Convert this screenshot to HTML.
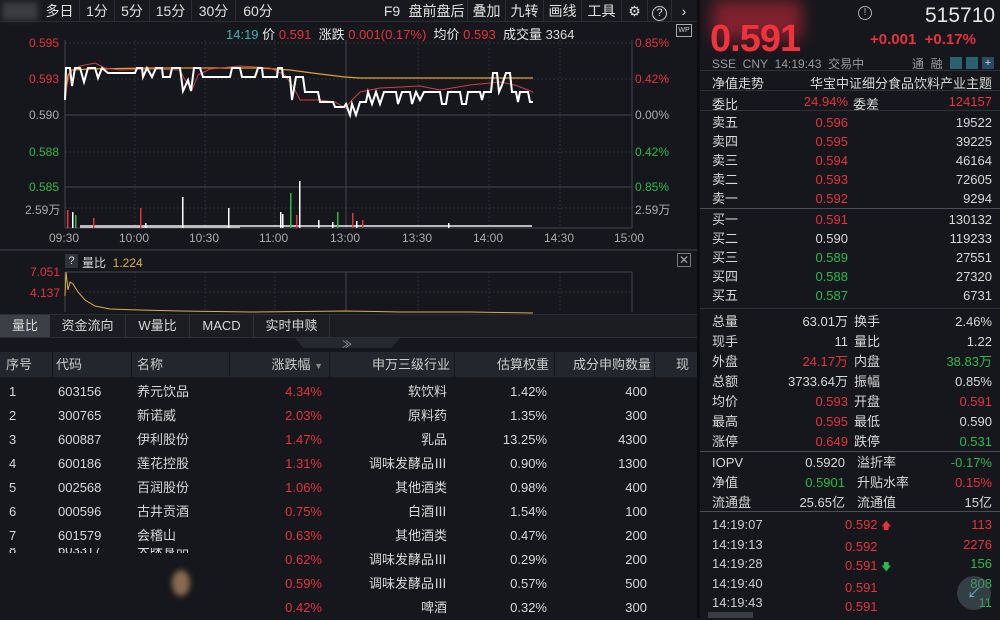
<!DOCTYPE html>
<html><head><meta charset="utf-8"><style>
*{margin:0;padding:0;box-sizing:border-box}
body{width:1000px;height:618px;background:#15171c;font-family:"Liberation Sans","Noto Sans CJK SC",sans-serif;font-size:13px;color:#d8d8d8;position:relative;overflow:hidden}
.a{position:absolute;white-space:nowrap}
.r{color:#e8323c}.g{color:#2fb84a}.w{color:#e6e6e6}.gy{color:#9a9a9a}.y{color:#e0b040}
.tb{position:absolute;top:0;height:22px;line-height:22px;font-size:14px;color:#e0e0e0;text-align:center;border-right:1px solid #2a2d33}
.rt{position:absolute;text-align:right;white-space:nowrap}
.ln{position:absolute;left:700px;width:300px;height:1px;background:#2e3138}
</style></head><body>
<!-- left area -->
<div class="a" style="left:0;top:0;width:697px;height:22px;background:#17191e;border-bottom:1px solid #2a2d33"></div>
<div class="a" style="left:2px;top:2px;width:36px;height:18px;background:#3a3c40;filter:blur(3px)"></div>
<div class="tb" style="left:40px;width:40px">多日</div>
<div class="tb" style="left:80px;width:35px">1分</div>
<div class="tb" style="left:115px;width:35px">5分</div>
<div class="tb" style="left:150px;width:42px">15分</div>
<div class="tb" style="left:192px;width:44px">30分</div>
<div class="tb" style="left:236px;width:44px;border:none">60分</div>
<div class="tb" style="left:378px;width:28px;border:none">F9</div>
<div class="tb" style="left:406px;width:62px">盘前盘后</div>
<div class="tb" style="left:468px;width:38px">叠加</div>
<div class="tb" style="left:506px;width:38px">九转</div>
<div class="tb" style="left:544px;width:38px">画线</div>
<div class="tb" style="left:582px;width:40px">工具</div>
<div class="tb" style="left:622px;width:26px">⚙</div>
<div class="tb" style="left:648px;width:24px"><span style="display:inline-block;width:15px;height:15px;border:1px solid #ccc;border-radius:50%;font-size:11px;line-height:13px">?</span></div>
<div class="tb" style="left:672px;width:24px;border:none">›</div>

<div class="a" style="top:24px;left:226px;font-size:13px"><span style="color:#3bb6b6">14:19</span> <span class="w">价</span> <span class="r">0.591</span>&nbsp; <span class="w">涨跌</span> <span class="r">0.001(0.17%)</span>&nbsp; <span class="w">均价</span> <span class="r">0.593</span>&nbsp; <span class="w">成交量</span> 3364</div>
<div class="a" style="left:676px;top:24px;width:16px;height:13px;border:1px solid #aaa;font-size:7px;line-height:11px;text-align:center;color:#ccc">WP</div>

<svg class="a" style="left:0;top:0" width="697" height="340">
<g stroke="#2c2f36" stroke-dasharray="2,2" fill="none">
<line x1="65" y1="43" x2="632" y2="43"/><line x1="65" y1="79" x2="632" y2="79"/><line x1="65" y1="152" x2="632" y2="152"/><line x1="65" y1="208" x2="632" y2="208"/>
<line x1="135" y1="40" x2="135" y2="228"/><line x1="205" y1="40" x2="205" y2="228"/><line x1="275" y1="40" x2="275" y2="228"/><line x1="418" y1="40" x2="418" y2="228"/><line x1="489" y1="40" x2="489" y2="228"/><line x1="560" y1="40" x2="560" y2="228"/>
<line x1="135" y1="272" x2="135" y2="312"/><line x1="205" y1="272" x2="205" y2="312"/><line x1="275" y1="272" x2="275" y2="312"/><line x1="418" y1="272" x2="418" y2="312"/><line x1="489" y1="272" x2="489" y2="312"/><line x1="560" y1="272" x2="560" y2="312"/>
<line x1="65" y1="292" x2="632" y2="292"/>
</g>
<g stroke="#41444b" fill="none">
<line x1="65" y1="40" x2="65" y2="228"/><line x1="632" y1="40" x2="632" y2="228"/><line x1="346" y1="40" x2="346" y2="228"/>
<line x1="65" y1="115" x2="632" y2="115"/><line x1="65" y1="187" x2="632" y2="187"/><line x1="65" y1="228" x2="632" y2="228"/>
<line x1="65" y1="272" x2="65" y2="312"/><line x1="632" y1="272" x2="632" y2="312"/><line x1="346" y1="272" x2="346" y2="312"/><line x1="65" y1="272" x2="632" y2="272"/>
<line x1="0" y1="250" x2="697" y2="250"/>
</g>
<polyline fill="none" stroke="#e0a030" stroke-width="1.2" points="65,100 68,75 72,70 90,69 150,68 200,68 260,68 290,70 320,74 345,77 360,78 533,78"/>
<polyline fill="none" stroke="#d04040" stroke-width="1" points="65,95 70,72 80,66 95,63 105,68 120,70 150,69 180,70 185,80 192,90 198,75 210,69 240,66 270,68 285,75 295,90 300,100 320,100 335,102 345,108 352,100 360,92 380,88 420,86 440,90 470,85 500,82 515,85 533,92"/>
<polyline fill="none" stroke="#fff" stroke-width="2" points="65,100 66,68 70,68 72,86 75,68 80,68 84,82 88,68 95,68 98,78 102,68 108,73 135,73 137,68 142,68 143,77 147,68 152,77 156,68 162,68 163,77 170,77 172,68 180,68 183,91 188,80 191,91 194,68 200,68 203,77 220,77 230,77 232,68 240,68 242,77 255,77 258,68 262,68 263,77 277,77 278,68 282,68 283,77 290,77 292,100 296,77 303,77 305,92 318,92 320,102 333,102 335,107 344,107 346,104 350,115 352,104 356,115 360,102 366,102 368,92 372,104 376,92 380,104 384,92 396,92 398,104 402,92 410,92 412,104 416,92 420,100 424,92 440,92 442,104 446,104 448,92 460,92 462,104 466,104 468,92 480,92 482,100 484,92 491,92 493,73 497,73 499,92 502,85 506,73 510,73 512,92 516,92 518,102 520,92 528,92 530,102 533,102"/>
<g fill="#fff">
<rect x="72" y="212" width="1.5" height="16"/><rect x="145" y="223" width="1.5" height="5"/><rect x="182" y="197" width="1.5" height="31"/><rect x="228" y="208" width="1.5" height="20"/><rect x="280" y="212" width="1.5" height="16"/><rect x="282" y="214" width="1.5" height="14"/><rect x="299" y="181" width="1.5" height="47"/><rect x="318" y="220" width="1.5" height="8"/><rect x="332" y="222" width="1.5" height="6"/><rect x="356" y="221" width="1.5" height="7"/><rect x="448" y="223" width="1.5" height="5"/>
</g>
<g fill="#fff" opacity="0.7">
<rect x="80" y="225" width="160" height="3"/><rect x="240" y="225" width="130" height="2"/><rect x="370" y="225" width="162" height="2"/>
</g>
<g fill="#e8323c"><rect x="67" y="210" width="1.5" height="18"/><rect x="93" y="218" width="1.5" height="10"/><rect x="140" y="208" width="1.5" height="20"/><rect x="296" y="215" width="1.5" height="13"/><rect x="352" y="213" width="1.5" height="15"/><rect x="362" y="220" width="1.5" height="8"/></g>
<g fill="#2fb84a"><rect x="75" y="215" width="1.5" height="13"/><rect x="290" y="193" width="1.5" height="35"/><rect x="337" y="212" width="1.5" height="16"/></g>
<polyline fill="none" stroke="#e0b040" stroke-width="1" points="65,296 66,272 68,290 70,282 73,284 78,292 85,300 95,306 110,309 140,310 180,311 250,312 346,311 400,312 470,312 533,313"/>
</svg>
<div class="a r" style="left:29px;top:36px;font-size:12px">0.595</div>
<div class="a r" style="left:29px;top:72px;font-size:12px">0.593</div>
<div class="a gy" style="left:29px;top:108px;font-size:12px;color:#aaa">0.590</div>
<div class="a g" style="left:29px;top:145px;font-size:12px">0.588</div>
<div class="a g" style="left:29px;top:180px;font-size:12px">0.585</div>
<div class="a" style="left:25px;top:201px;font-size:12px;color:#aaa">2.59万</div>
<div class="a r" style="left:635px;top:36px;font-size:12px">0.85%</div>
<div class="a r" style="left:635px;top:72px;font-size:12px">0.42%</div>
<div class="a" style="left:635px;top:108px;font-size:12px;color:#aaa">0.00%</div>
<div class="a g" style="left:635px;top:145px;font-size:12px">0.42%</div>
<div class="a g" style="left:635px;top:180px;font-size:12px">0.85%</div>
<div class="a" style="left:635px;top:201px;font-size:12px;color:#aaa">2.59万</div>
<div class="a" style="top:231px;left:49px;font-size:12px;color:#aaa;width:600px;height:14px">
<span class="a" style="left:0">09:30</span><span class="a" style="left:70px">10:00</span><span class="a" style="left:140px">10:30</span><span class="a" style="left:210px">11:00</span><span class="a" style="left:281px">13:00</span><span class="a" style="left:353px">13:30</span><span class="a" style="left:424px">14:00</span><span class="a" style="left:495px">14:30</span><span class="a" style="left:565px">15:00</span></div>

<div class="a" style="left:65px;top:254px;width:13px;height:14px;background:#30333a;color:#ddd;font-size:11px;text-align:center;line-height:14px">?</div>
<div class="a" style="left:82px;top:254px;font-size:12px">量比 <span class="y">&nbsp;1.224</span></div>
<div class="a r" style="left:30px;top:265px;font-size:12px">7.051</div>
<div class="a r" style="left:30px;top:286px;font-size:12px">4.137</div>
<div class="a" style="left:677px;top:253px;width:14px;height:14px;border:1px solid #777;color:#aaa;font-size:12px;line-height:12px;text-align:center">✕</div>

<div class="a" style="left:0;top:314px;width:697px;height:24px;background:#1b1d22;border-top:1px solid #2a2d33;border-bottom:1px solid #2a2d33"></div>
<div class="a" style="left:0;top:315px;width:50px;height:22px;background:#3c3f46;line-height:22px;text-align:center">量比</div>
<div class="a" style="left:50px;top:315px;width:76px;height:22px;line-height:22px;text-align:center;border-right:1px solid #2e3138">资金流向</div>
<div class="a" style="left:126px;top:315px;width:64px;height:22px;line-height:22px;text-align:center;border-right:1px solid #2e3138">W量比</div>
<div class="a" style="left:190px;top:315px;width:64px;height:22px;line-height:22px;text-align:center;border-right:1px solid #2e3138">MACD</div>
<div class="a" style="left:254px;top:315px;width:76px;height:22px;line-height:22px;text-align:center;border-right:1px solid #2e3138">实时申赎</div>
<div class="a" style="left:295px;top:338px;width:105px;height:10px;background:#25282e;clip-path:polygon(0 0,100% 0,92% 100%,8% 100%)"></div>
<div class="a" style="left:342px;top:336px;font-size:10px;color:#aaa">≫</div>

<div class="a" style="left:0;top:352px;width:697px;height:25px;background:#23262c"></div>
<div class="a" style="top:352px;left:0;width:697px;height:25px;line-height:25px;font-size:13px;color:#ccc">
<span class="a" style="left:6px">序号</span><span class="a" style="left:56px">代码</span><span class="a" style="left:137px">名称</span>
<span class="rt" style="right:374px">涨跌幅 <span style="font-size:9px;color:#888">▼</span></span><span class="rt" style="right:247px">申万三级行业</span><span class="rt" style="right:148px">估算权重</span><span class="rt" style="right:46px">成分申购数量</span><span class="a" style="left:676px">现</span>
</div>
<div class="a" style="left:52px;top:352px;width:1px;height:25px;background:#15171c"></div>
<div class="a" style="left:131px;top:352px;width:1px;height:25px;background:#15171c"></div>
<div class="a" style="left:229px;top:352px;width:1px;height:25px;background:#15171c"></div>
<div class="a" style="left:329px;top:352px;width:1px;height:25px;background:#15171c"></div>
<div class="a" style="left:454px;top:352px;width:1px;height:25px;background:#15171c"></div>
<div class="a" style="left:554px;top:352px;width:1px;height:25px;background:#15171c"></div>
<div class="a" style="left:654px;top:352px;width:1px;height:25px;background:#15171c"></div>

<div class="a" style="left:0;top:380px;width:697px;font-size:13px;line-height:24px">
<div style="position:relative;height:24px"><span class="a" style="left:9px">1</span><span class="a" style="left:58px">603156</span><span class="a" style="left:137px">养元饮品</span><span class="rt r" style="right:375px">4.34%</span><span class="rt" style="right:250px">软饮料</span><span class="rt" style="right:150px">1.42%</span><span class="rt" style="right:50px">400</span></div>
<div style="position:relative;height:24px"><span class="a" style="left:9px">2</span><span class="a" style="left:58px">300765</span><span class="a" style="left:137px">新诺威</span><span class="rt r" style="right:375px">2.03%</span><span class="rt" style="right:250px">原料药</span><span class="rt" style="right:150px">1.35%</span><span class="rt" style="right:50px">300</span></div>
<div style="position:relative;height:24px"><span class="a" style="left:9px">3</span><span class="a" style="left:58px">600887</span><span class="a" style="left:137px">伊利股份</span><span class="rt r" style="right:375px">1.47%</span><span class="rt" style="right:250px">乳品</span><span class="rt" style="right:150px">13.25%</span><span class="rt" style="right:50px">4300</span></div>
<div style="position:relative;height:24px"><span class="a" style="left:9px">4</span><span class="a" style="left:58px">600186</span><span class="a" style="left:137px">莲花控股</span><span class="rt r" style="right:375px">1.31%</span><span class="rt" style="right:250px">调味发酵品Ⅲ</span><span class="rt" style="right:150px">0.90%</span><span class="rt" style="right:50px">1300</span></div>
<div style="position:relative;height:24px"><span class="a" style="left:9px">5</span><span class="a" style="left:58px">002568</span><span class="a" style="left:137px">百润股份</span><span class="rt r" style="right:375px">1.06%</span><span class="rt" style="right:250px">其他酒类</span><span class="rt" style="right:150px">0.98%</span><span class="rt" style="right:50px">400</span></div>
<div style="position:relative;height:24px"><span class="a" style="left:9px">6</span><span class="a" style="left:58px">000596</span><span class="a" style="left:137px">古井贡酒</span><span class="rt r" style="right:375px">0.75%</span><span class="rt" style="right:250px">白酒Ⅲ</span><span class="rt" style="right:150px">1.54%</span><span class="rt" style="right:50px">100</span></div>
<div style="position:relative;height:24px"><span class="a" style="left:9px">7</span><span class="a" style="left:58px">601579</span><span class="a" style="left:137px">会稽山</span><span class="rt r" style="right:375px">0.63%</span><span class="rt" style="right:250px">其他酒类</span><span class="rt" style="right:150px">0.47%</span><span class="rt" style="right:50px">200</span></div>
<div style="position:relative;height:24px;overflow:hidden"><span class="a" style="left:9px;top:-10px">8</span><span class="a" style="left:58px;top:-10px">603317</span><span class="a" style="left:137px;top:-10px">天味食品</span><span class="rt r" style="right:375px">0.62%</span><span class="rt" style="right:250px">调味发酵品Ⅲ</span><span class="rt" style="right:150px">0.29%</span><span class="rt" style="right:50px">200</span></div>
<div style="position:relative;height:24px"><span class="rt r" style="right:375px">0.59%</span><span class="rt" style="right:250px">调味发酵品Ⅲ</span><span class="rt" style="right:150px">0.57%</span><span class="rt" style="right:50px">500</span></div>
<div style="position:relative;height:24px"><span class="rt r" style="right:375px">0.42%</span><span class="rt" style="right:250px">啤酒</span><span class="rt" style="right:150px">0.32%</span><span class="rt" style="right:50px">300</span></div>
</div>
<div class="a" style="left:0;top:553px;width:230px;height:65px;background:#15171c"></div>
<div class="a" style="left:172px;top:570px;width:18px;height:26px;background:#8a6a50;border-radius:50%;filter:blur(3px)"></div>

<!-- right panel -->
<div class="a" style="left:697px;top:0;width:3px;height:618px;background:#0c0d10"></div>
<div class="a" style="left:712px;top:0;width:90px;height:40px;background:#c8283a;opacity:.6;filter:blur(8px)"></div>
<div class="a r" style="left:710px;top:18px;font-size:38px;font-weight:bold;letter-spacing:-1px;color:#f0323c">0.591</div>
<div class="a" style="left:858px;top:6px;width:14px;height:14px;border:1.5px solid #aaa;border-radius:50%;font-size:10px;line-height:11px;text-align:center;color:#aaa">!</div>
<div class="a" style="left:925px;top:4px;font-size:21px;color:#e6e6e6">515710</div>
<div class="a r" style="left:870px;top:31px;font-size:15px;font-weight:bold">+0.001&nbsp; +0.17%</div>
<div class="a gy" style="left:712px;top:55px;font-size:12px">SSE&nbsp; CNY&nbsp; 14:19:43&nbsp; 交易中</div>
<div class="a gy" style="left:912px;top:55px;font-size:12px">通&nbsp; 融</div>
<div class="a" style="left:950px;top:57px;width:12px;height:12px;background:#2a6070"></div>
<div class="a" style="left:966px;top:57px;width:12px;height:12px;background:#2a6070"></div>
<div class="a" style="left:982px;top:57px;width:12px;height:12px;background:#2a4a60;color:#cde;font-size:11px;line-height:12px;text-align:center">+</div>
<div class="ln" style="top:70px"></div>
<div class="a" style="left:712px;top:73px">净值走势</div>
<div class="rt" style="right:8px;top:73px">华宝中证细分食品饮料产业主题</div>
<div class="ln" style="top:90px"></div>
<div class="a" style="left:712px;top:94px">委比</div><div class="rt r" style="right:152px;top:94px">24.94%</div><div class="a" style="left:853px;top:94px">委差</div><div class="rt r" style="right:8px;top:94px">124157</div>
<div class="ln" style="top:110px"></div>
<div class="a" style="left:712px;top:113px;line-height:19px">卖五<br>卖四<br>卖三<br>卖二<br>卖一</div>
<div class="rt r" style="right:152px;top:113px;line-height:19px">0.596<br>0.595<br>0.594<br>0.593<br>0.592</div>
<div class="rt" style="right:8px;top:113px;line-height:19px">19522<br>39225<br>46164<br>72605<br>9294</div>
<div class="ln" style="top:208px;background:#4a4d55"></div>
<div class="a" style="left:712px;top:210px;line-height:19px">买一<br>买二<br>买三<br>买四<br>买五</div>
<div class="rt" style="right:152px;top:210px;line-height:19px"><span class="r">0.591</span><br>0.590<br><span class="g">0.589</span><br><span class="g">0.588</span><br><span class="g">0.587</span></div>
<div class="rt" style="right:8px;top:210px;line-height:19px">130132<br>119233<br>27551<br>27320<br>6731</div>
<div class="ln" style="top:308px"></div>
<div class="a" style="left:712px;top:312px;line-height:20px">总量<br>现手<br>外盘<br>总额<br>均价<br>最高<br>涨停</div>
<div class="rt" style="right:152px;top:312px;line-height:20px">63.01万<br>11<br><span class="r">24.17万</span><br>3733.64万<br><span class="r">0.593</span><br><span class="r">0.595</span><br><span class="r">0.649</span></div>
<div class="a" style="left:854px;top:312px;line-height:20px">换手<br>量比<br>内盘<br>振幅<br>开盘<br>最低<br>跌停</div>
<div class="rt" style="right:8px;top:312px;line-height:20px">2.46%<br>1.22<br><span class="g">38.83万</span><br>0.85%<br><span class="r">0.591</span><br>0.590<br><span class="g">0.531</span></div>
<div class="ln" style="top:451px;background:#4a4d55"></div>
<div class="a" style="left:712px;top:453px;line-height:20px">IOPV<br>净值<br>流通盘</div>
<div class="rt" style="right:155px;top:453px;line-height:20px">0.5920<br><span class="g">0.5901</span><br>25.65亿</div>
<div class="a" style="left:857px;top:453px;line-height:20px">溢折率<br>升贴水率<br>流通值</div>
<div class="rt" style="right:8px;top:453px;line-height:20px"><span class="g">-0.17%</span><br><span class="r">0.15%</span><br>15亿</div>
<div class="ln" style="top:511px;background:#4a4d55"></div>
<div class="a" style="left:712px;top:515px;line-height:19.5px;color:#ccc">14:19:07<br>14:19:13<br>14:19:28<br>14:19:40<br>14:19:43</div>
<div class="a r" style="left:845px;top:515px;line-height:19.5px">0.592 <span style="font-size:10px">🡅</span><br>0.592<br>0.591 <span class="g" style="font-size:10px">🡇</span><br>0.591<br>0.591</div>
<div class="rt" style="right:8px;top:515px;line-height:19.5px"><span class="r">113</span><br><span class="r">2276</span><br><span class="g">156</span><br><span class="g">808</span><br><span class="g">11</span></div>
<div class="a" style="left:957px;top:576px;width:34px;height:34px;border-radius:50%;background:rgba(90,110,120,.45);color:#6ac;font-size:14px;text-align:center;line-height:34px">↙</div>
<div class="a" style="left:708px;top:612px;width:45px;height:6px;background:#3a3d44"></div>
</body></html>
